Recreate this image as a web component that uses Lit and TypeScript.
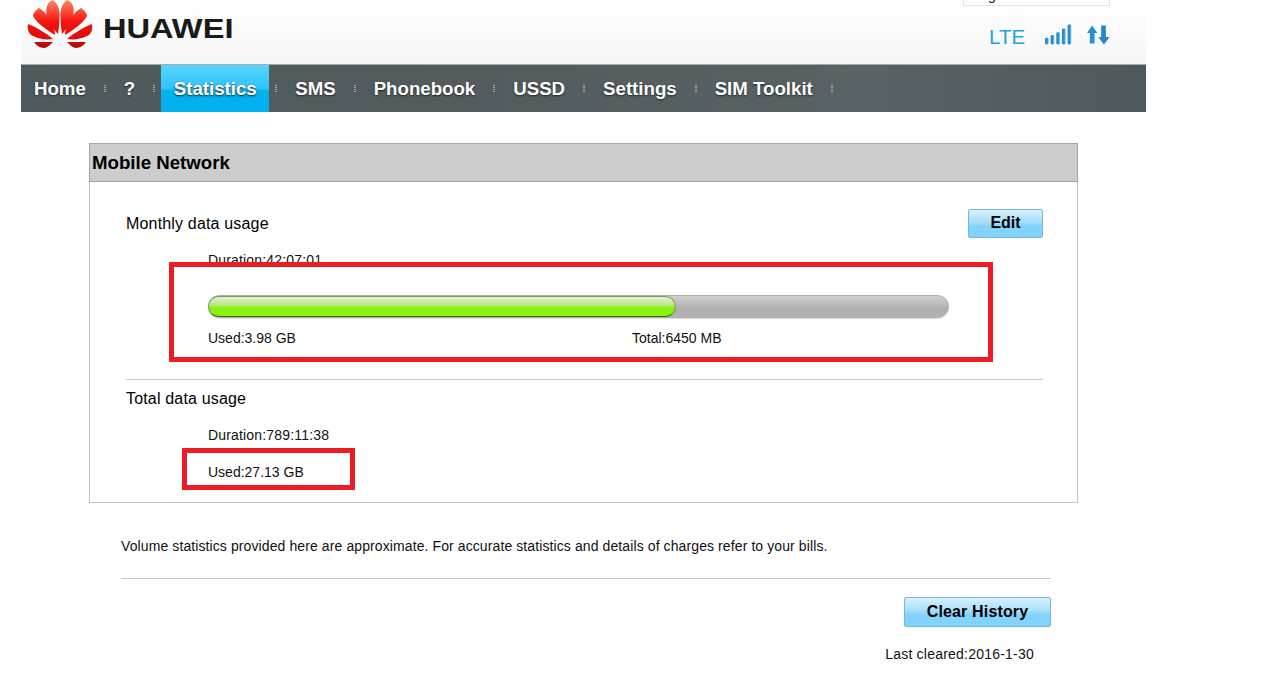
import { LitElement, css, html, svg } from "lit";
import { customElement } from "lit/decorators.js";

const NAV = ["Home", "?", "Statistics", "SMS", "Phonebook", "USSD", "Settings", "SIM Toolkit"];
const ACTIVE = "Statistics";

// half of the flower, mirrored for the right side
const PETALS = [
  "M58 34C50 26 44 14 47 6C48 3 50 1 53 0C58 4 59.5 9 59.5 14C59.5 21 59 28 58 34Z",
  "M55 35C45 29 35 21 33 16C33 13 36 10 39 8C46 12 51 20 53 26C54 29 55 32 55 35Z",
  "M53 39C46 33 36 27 28 24C27 30 29 34 33 36C39 39 46 40 53 39Z",
  "M53 42C46 42 40 42 34 42C36 45 40 48 44 48C47 48 50 45 53 42Z",
];

@customElement("app-root")
export class AppRoot extends LitElement {
  static styles = css`
    :host {
      display: block;
      font-family: "Liberation Sans", Arial, sans-serif;
      color: #111;
      font-size: 14px;
    }
    .page {
      position: relative;
      height: 685px;
      overflow: hidden;
      background: #fff;
    }
    .frame {
      width: 1125px;
      margin-left: 21px;
    }
    .top {
      height: 64px;
      display: flex;
      align-items: flex-start;
      background: linear-gradient(#fff, #f6f6f6);
      border-bottom: 1px solid #a8abab;
    }
    .logo {
      display: block;
      margin-left: 6px;
      flex: none;
    }
    .word {
      margin: 12px 0 0 9.5px;
      font-size: 28px;
      line-height: 34px;
      font-weight: 700;
      color: #1a1a1a;
      transform: scaleX(1.165);
      transform-origin: left center;
    }
    .status {
      margin-left: auto;
      margin-right: 36px;
      width: 147px;
    }
    .lang {
      box-sizing: border-box;
      height: 6px;
      width: 147px;
      overflow: hidden;
      display: flex;
      align-items: flex-end;
      padding: 0 0 5px 7px;
      border: 1px solid #e2e2ea;
      border-top: 0;
      background: #fff;
      font-size: 14px;
      line-height: 10px;
    }
    .indicators {
      display: flex;
      align-items: flex-start;
      margin: 18px 0 0 26px;
    }
    .lte {
      font-size: 20.5px;
      line-height: 26px;
      color: #1ba6dc;
    }
    .signal {
      display: block;
      margin-left: 20px;
    }
    .arrows {
      display: block;
      margin-left: 15px;
    }
    nav {
      height: 47px;
      display: flex;
      align-items: stretch;
      padding-left: 13px;
      background: linear-gradient(90deg, #4f5a5d, #525c5e 40%, #596365 75%, #4f595b);
    }
    .item {
      display: flex;
      align-items: center;
      font-size: 18.67px;
      font-weight: 700;
      color: #fff;
      text-shadow: 0 1px 2px #222;
    }
    .item.on {
      padding: 0 12.5px;
      margin: 0 -12px;
      background: linear-gradient(#5ad6ff, #2fc2fb 50%, #02b2ef 55%, #02b0ee);
    }
    .sep {
      width: 2px;
      margin: 0 18px;
      align-self: center;
      height: 8px;
      background: repeating-linear-gradient(rgba(255, 255, 255, 0.5) 0 1px, transparent 1px 2px);
    }
    main {
      padding: 31px 0 0 89px;
    }
    .panel {
      box-sizing: border-box;
      width: 989px;
      height: 360px;
      border: 1px solid #c4c4c4;
    }
    .panel h2 {
      box-sizing: border-box;
      height: 39px;
      margin: -1px -1px 0;
      padding-left: 2px;
      background: #cdcdcd;
      border: 1px solid #a6a6a6;
      font-size: 18.67px;
      line-height: 37px;
      color: #000;
    }
    .body {
      padding: 28px 34px 0 36px;
    }
    .row {
      display: flex;
      justify-content: space-between;
      align-items: flex-start;
    }
    .heading {
      font-size: 16px;
      line-height: 28px;
      letter-spacing: 0.17px;
      color: #000;
    }
    .btn {
      box-sizing: border-box;
      border: 1px solid #7fb2d8;
      border-radius: 2px;
      background: linear-gradient(#d9f1fd, #a8defa 45%, #82d3fb 60%, #82d3fb);
      font-size: 16px;
      font-weight: 700;
      color: #000;
      text-align: center;
      flex: none;
    }
    .edit {
      width: 75px;
      height: 29px;
      line-height: 25px;
      margin-top: -1px;
    }
    .stats {
      padding-left: 82px;
    }
    .line {
      line-height: 16px;
    }
    .time {
      letter-spacing: 0.17px;
    }
    .duration {
      margin-top: 14px;
    }
    .bar {
      box-sizing: border-box;
      width: 741px;
      height: 23px;
      margin-top: 27px;
      border: 1px solid #adadad;
      border-radius: 12px;
      background: linear-gradient(#cfcfcf, #bcbcbc 40%, #aeaeae 60%, #b4b4b4);
      box-shadow: 0 1px 1px #ddd;
    }
    .fill {
      box-sizing: border-box;
      height: 21px;
      margin: 0 0 0 -1px;
      border: 1px solid #7d9c5f;
      border-bottom-color: #3f6417;
      border-radius: 11px;
      background: linear-gradient(#e4efd8, #b7e681 45%, #86f40e 55%, #86f40e);
    }
    .values {
      display: flex;
      margin-top: 12px;
      line-height: 16px;
    }
    .values span:first-child {
      width: 424px;
    }
    hr {
      height: 1px;
      margin: 0;
      border: 0;
      background: #c8c8c8;
    }
    .body hr {
      margin-top: 33px;
    }
    .total {
      margin-top: 5px;
    }
    .total-stats {
      padding: 14px 0 0 82px;
    }
    .total-stats .line + .line {
      margin-top: 21px;
    }
    .foot {
      width: 930px;
      margin-left: 32px;
    }
    .foot p {
      margin: 35px 0 0;
      line-height: 16px;
      letter-spacing: 0.1px;
    }
    .foot hr {
      margin-top: 24px;
    }
    .foot-actions {
      display: flex;
      flex-direction: column;
      align-items: flex-end;
    }
    .clear {
      width: 147px;
      height: 30px;
      line-height: 28px;
      margin-top: 18px;
      letter-spacing: 0.15px;
    }
    .cleared {
      margin: 19px 17px 0 0;
      line-height: 16px;
      letter-spacing: 0.22px;
    }
    .mark {
      position: absolute;
      box-sizing: border-box;
      border: 5px solid #ed1c24;
    }
    .mark.month {
      left: 169px;
      top: 262px;
      width: 824px;
      height: 100px;
    }
    .mark.used {
      left: 182px;
      top: 448px;
      width: 173px;
      height: 42px;
    }
  `;

  private logo() {
    return html`<svg class="logo" width="66" height="50" viewBox="27 0 66 50">
      <defs>
        <linearGradient id="petal" gradientUnits="userSpaceOnUse" x1="0" y1="0" x2="0" y2="48">
          <stop offset="0" stop-color="#ff8a60" />
          <stop offset="0.45" stop-color="#f41410" />
          <stop offset="0.8" stop-color="#e00c0c" />
          <stop offset="1" stop-color="#a80808" />
        </linearGradient>
      </defs>
      ${PETALS.map((d) => svg`<path d=${d} fill="url(#petal)" />`)}
      <g transform="matrix(-1 0 0 1 120 0)">
        ${PETALS.map((d) => svg`<path d=${d} fill="url(#petal)" />`)}
      </g>
    </svg>`;
  }

  private signal() {
    const bars = [7, 10, 13, 17, 21];
    return html`<svg class="signal" width="29" height="21" viewBox="0 0 29 21">
      <defs>
        <linearGradient id="sig" x1="0" y1="0" x2="1" y2="0">
          <stop offset="0" stop-color="#1f86c4" />
          <stop offset="0.6" stop-color="#2a94d2" />
          <stop offset="1" stop-color="#9ccfea" />
        </linearGradient>
      </defs>
      ${bars.map(
        (h, i) =>
          svg`<rect x=${i * 6} y=${21 - h} width="4" height=${h} rx="1.5" fill="url(#sig)" />`,
      )}
    </svg>`;
  }

  private arrows() {
    return html`<svg class="arrows" width="24" height="22" viewBox="0 0 24 22">
      <path d="M5.5 1L11 9H8V20H3V9H0Z" fill="#2791d0" />
      <path d="M15 1H20V13H24L18 21L12 13H15Z" fill="#2287c6" />
    </svg>`;
  }

  render() {
    return html`<div class="page">
      <div class="frame">
        <header class="top">
          ${this.logo()}
          <div class="word">HUAWEI</div>
          <div class="status">
            <div class="lang">English</div>
            <div class="indicators">
              <span class="lte">LTE</span>
              ${this.signal()} ${this.arrows()}
            </div>
          </div>
        </header>
        <nav>
          ${NAV.map(
            (name) => html`<span class="item ${name === ACTIVE ? "on" : ""}">${name}</span>
              <span class="sep"></span>`,
          )}
        </nav>
      </div>
      <main>
        <section class="panel">
          <h2>Mobile Network</h2>
          <div class="body">
            <div class="row">
              <div class="heading">Monthly data usage</div>
              <div class="btn edit">Edit</div>
            </div>
            <div class="stats">
              <div class="line time duration">Duration:42:07:01</div>
              <div class="bar"><div class="fill" style="width:63.3%"></div></div>
              <div class="values"><span>Used:3.98 GB</span><span>Total:6450 MB</span></div>
            </div>
            <hr />
            <div class="heading total">Total data usage</div>
            <div class="total-stats">
              <div class="line time">Duration:789:11:38</div>
              <div class="line">Used:27.13 GB</div>
            </div>
          </div>
        </section>
        <div class="foot">
          <p>Volume statistics provided here are approximate. For accurate statistics and details of charges refer to your bills.</p>
          <hr />
          <div class="foot-actions">
            <div class="btn clear">Clear History</div>
            <div class="cleared">Last cleared:2016-1-30</div>
          </div>
        </div>
      </main>
      <div class="mark month"></div>
      <div class="mark used"></div>
    </div>`;
  }
}
